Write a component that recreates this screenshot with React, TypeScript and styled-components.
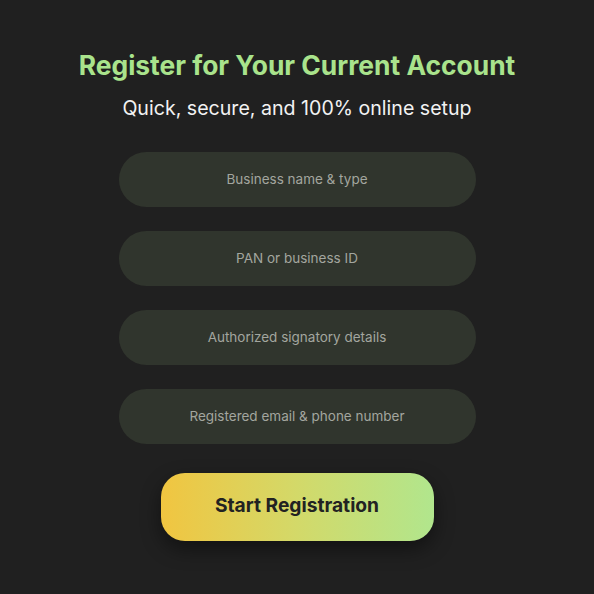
import React from "react";
import styled, {createGlobalStyle} from "styled-components";

const GlobalStyle = createGlobalStyle`
    html, body {
        margin: 0;
        padding: 0;
        background: #202020;
    }
    body {
        font-family: Inter, "Noto Sans", sans-serif;
    }
`

const Page = styled.div`
    width: 594px;
    height: 594px;
    background: #202020;
    display: flex;
    flex-direction: column;
    align-items: center;
    box-sizing: border-box;
    padding-top: 48px;
`

const Title = styled.h1`
    margin: 0;
    font-size: 26.4px;
    line-height: 34px;
    font-weight: 700;
    color: #a9e38c;
`

const Subtitle = styled.p`
    margin: 13px 0 0;
    font-size: 19.6px;
    line-height: 26px;
    font-weight: 400;
    color: #f2f2f2;
`

const Fields = styled.div`
    display: flex;
    flex-direction: column;
    gap: 24px;
    margin-top: 31px;
`

const Field = styled.input`
    width: 357px;
    height: 55px;
    box-sizing: border-box;
    border: none;
    outline: none;
    border-radius: 28px;
    background: #30352d;
    color: #e0e0e0;
    font-family: Inter, "Noto Sans", sans-serif;
    font-size: 13.5px;
    text-align: center;
    padding-bottom: 2px;
    &::placeholder {
        color: #a3a69f;
    }
`

const StartButton = styled.button`
    margin-top: 29px;
    width: 273px;
    height: 68px;
    padding: 0 0 4px;
    border: none;
    border-radius: 24px;
    background: linear-gradient(90deg, #f1c540 0%, #d3d969 50%, #b1e68d 100%);
    box-shadow: 0 8px 20px rgba(0, 0, 0, 0.45);
    color: #222222;
    font-family: Inter, "Noto Sans", sans-serif;
    font-size: 19.2px;
    font-weight: 700;
    cursor: pointer;
`

const fields = [
    "Business name & type",
    "PAN or business ID",
    "Authorized signatory details",
    "Registered email & phone number",
]

export default function App() {
    return (
        <>
            <GlobalStyle/>
            <Page>
                <Title>Register for Your Current Account</Title>
                <Subtitle>Quick, secure, and 100% online setup</Subtitle>
                <Fields>
                    {fields.map((f) => (
                        <Field key={f} placeholder={f}/>
                    ))}
                </Fields>
                <StartButton>Start Registration</StartButton>
            </Page>
        </>
    )
}
